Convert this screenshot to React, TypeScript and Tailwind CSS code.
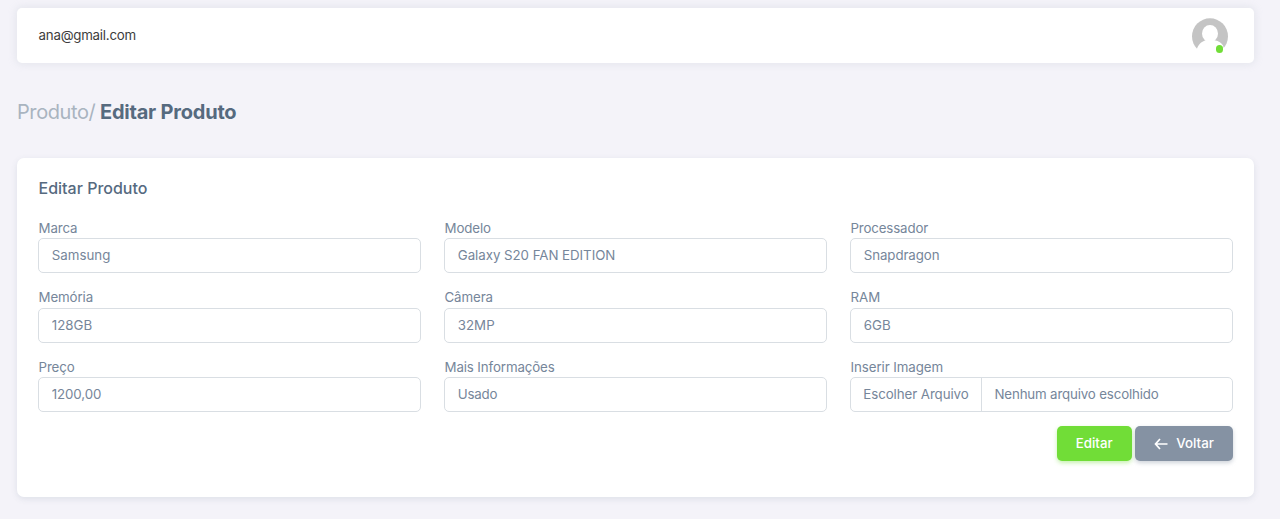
import React from "react";

type FieldData = { id: string; label: string; value: string; labelClass: string; valueClass: string };

const fields: FieldData[] = [
  { id: "marca", label: "Marca", value: "Samsung", labelClass: "tracking-[-0.1px]", valueClass: "" },
  { id: "modelo", label: "Modelo", value: "Galaxy S20 FAN EDITION", labelClass: "tracking-[-0.1px]", valueClass: "tracking-[-0.04px]" },
  { id: "processador", label: "Processador", value: "Snapdragon", labelClass: "tracking-[-0.15px]", valueClass: "tracking-[-0.1px]" },
  { id: "memoria", label: "Memória", value: "128GB", labelClass: "tracking-[-0.1px]", valueClass: "" },
  { id: "camera", label: "Câmera", value: "32MP", labelClass: "tracking-[-0.1px]", valueClass: "" },
  { id: "ram", label: "RAM", value: "6GB", labelClass: "", valueClass: "" },
  { id: "preco", label: "Preço", value: "1200,00", labelClass: "tracking-[-0.1px]", valueClass: "tracking-[-0.12px]" },
  { id: "info", label: "Mais Informações", value: "Usado", labelClass: "tracking-[-0.12px]", valueClass: "tracking-[-0.2px]" },
];

function FieldLabel({ id, text, className }: { id: string; text: string; className?: string }) {
  return (
    <label htmlFor={id} className={`block h-[20.5px] pl-[0.5px] text-[13.3px] leading-[21px] text-[#76869a] ${className ?? ""}`}>
      {text}
    </label>
  );
}

function Field({ field }: { field: FieldData }) {
  return (
    <div className="h-[69.4px]">
      <FieldLabel id={field.id} text={field.label} className={field.labelClass} />
      <input
        id={field.id}
        defaultValue={field.value}
        className={`block h-[35px] w-full rounded-[5px] border border-[#d9dee3] bg-white px-[12.8px] pb-px text-[13.3px] text-[#76869a] outline-none ${field.valueClass}`}
      />
    </div>
  );
}

function Avatar() {
  return (
    <div className="relative size-9">
      <svg viewBox="0 0 36 36" className="size-9">
        <circle cx="18" cy="18.3" r="18" fill="#c4c4c4" />
        <ellipse cx="18" cy="15.4" rx="8" ry="8.500" fill="#fff" />
        <path d="M13.500 20v2.300C9 24 6.500 26.500 4.800 31.200L2 37h32l-3-9.500c-1.500-2.500-4-4.300-8.500-5.200V20z" fill="#fff" />
      </svg>
      <span className="absolute right-[4.500px] bottom-[1px] size-[7.500px] rounded-full bg-[#71dd37]" />
    </div>
  );
}

export default function App() {
  return (
    <div className="h-[519px] overflow-hidden bg-[#f4f3f9] pr-[26px] pl-[17px] pt-2 font-['Inter','Liberation_Sans',sans-serif]">
      <nav className="flex h-[55px] items-center justify-between rounded-[5px] bg-white pr-[26.500px] pl-[21.500px] shadow-[0_0_9px_1px_rgba(161,172,184,0.2)]">
        <span className="text-[13.3px] tracking-[-0.22px] text-[#3d3d3d]">ana@gmail.com</span>
        <Avatar />
      </nav>

      <h4 className="mt-[36px] flex h-[27px] items-center gap-1 text-[20px] leading-[27px] whitespace-nowrap">
        <span className="w-[79px] font-normal tracking-[-0.4px] text-[#a9b4c0]">Produto/</span>
        <span className="font-bold tracking-[-0.22px] text-[#566a7f]">Editar Produto</span>
      </h4>

      <main className="mt-[31.500px] h-[339.500px] rounded-[7px] bg-white px-[21px] pt-[20px] shadow-[0_2px_6px_0_rgba(67,89,113,0.12)]">
        <h5 className="h-[40.400px] pl-[0.5px] text-[16px] leading-[20px] font-medium text-[#566a7f]">Editar Produto</h5>
        <form onSubmit={(e) => e.preventDefault()}>
          <div className="grid grid-cols-3 gap-x-[23px]">
            {fields.map((field) => (
              <Field key={field.id} field={field} />
            ))}
            <div className="h-[69.4px]">
              <FieldLabel id="imagem" text="Inserir Imagem" className="tracking-[-0.08px]" />
              <div className="flex h-[35px] items-stretch overflow-hidden rounded-[5px] border border-[#d9dee3] text-[13.3px] text-[#76869a]">
                <button id="imagem" type="button" className="w-[131px] border-r border-[#d9dee3] pt-px tracking-[-0.08px] whitespace-nowrap">
                  Escolher Arquivo
                </button>
                <span className="flex items-center pt-px pl-[12.500px] tracking-[-0.16px] whitespace-nowrap">Nenhum arquivo escolhido</span>
              </div>
            </div>
          </div>
          <div className="flex justify-end gap-[3.500px]">
            <button className="h-[35px] w-[75px] rounded-[5px] bg-[#71dd37] text-[13.3px] font-medium text-white shadow-[0_2px_4px_0_rgba(113,221,55,0.4)]">
              Editar
            </button>
            <button
              type="button"
              className="flex h-[35px] w-[97.800px] items-center justify-center gap-2 rounded-[5px] bg-[#8592a3] text-[13.3px] font-medium text-white shadow-[0_2px_4px_0_rgba(133,146,163,0.4)]"
            >
              <svg viewBox="0 0 14 12" className="mt-px h-3 w-3.5" fill="none" stroke="currentColor" strokeWidth="1.7">
                <path d="M6 1L1.500 6L6 11M1.500 6H13.500" />
              </svg>
              Voltar
            </button>
          </div>
        </form>
      </main>
    </div>
  );
}
